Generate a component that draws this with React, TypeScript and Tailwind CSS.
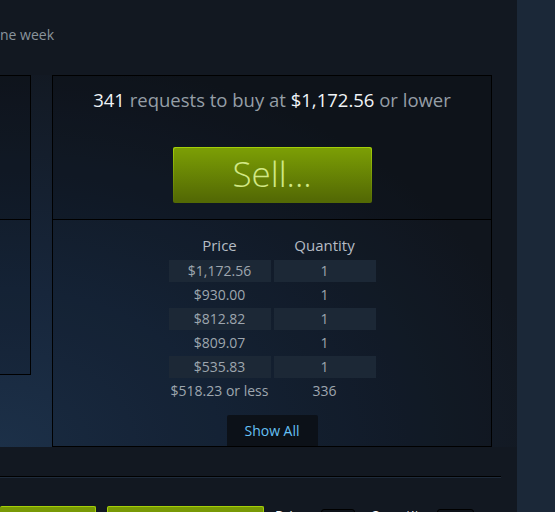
// Steam market: buy-order panel (cropped view)

const orders = [
  { price: "$1,172.56", qty: "1" },
  { price: "$930.00", qty: "1" },
  { price: "$812.82", qty: "1" },
  { price: "$809.07", qty: "1" },
  { price: "$535.83", qty: "1" },
];

function OrderTable() {
  return (
    <div className="grid grid-cols-[102px_102px] gap-x-[3px] gap-y-[2px] text-center">
      <div className="h-[24px] text-[15px] leading-[22px] text-[#b5bcc4]">Price</div>
      <div className="h-[24px] text-[15px] leading-[22px] text-[#b5bcc4]">Quantity</div>
      {orders.map((o, i) => (
        <div key={o.price} className="contents">
          <div
            className={
              "h-[22px] text-[14px] leading-[22px] text-[#9ea6ae] " +
              (i % 2 === 0 ? "bg-[#1c2836]" : "")
            }
          >
            {o.price}
          </div>
          <div
            className={
              "h-[22px] text-[14px] leading-[22px] text-[#9ea6ae] " +
              (i % 2 === 0 ? "bg-[#1c2836]" : "")
            }
          >
            {o.qty}
          </div>
        </div>
      ))}
      <div className="h-[22px] whitespace-nowrap text-[14px] leading-[22px] text-[#9ea6ae]">
        $518.23 or less
      </div>
      <div className="h-[22px] text-[14px] leading-[22px] text-[#9ea6ae]">336</div>
    </div>
  );
}

export default function App() {
  return (
    <div className="flex h-[512px] w-[555px] overflow-hidden bg-[#1b2838] font-['Open_Sans',sans-serif]">
      <div className="flex w-[517px] shrink-0 flex-col bg-[#121821]">
        <p className="mt-[26px] h-[18px] text-[14px] leading-[18px] text-[#8a949c]">ne week</p>

        <div className="mt-[31px] flex h-[372px] shrink-0 gap-[21px] bg-[radial-gradient(ellipse_at_0%_100%,#1c3048_0%,#17263b_30%,rgba(18,24,33,0)_75%)]">
          {/* left box, cut off */}
          <div className="flex h-[300px] w-[31px] flex-col border border-l-0 border-black">
            <div className="h-[144px] shrink-0 border-b border-black bg-black/20" />
            <div className="flex-1 bg-black/10" />
          </div>

          {/* right box */}
          <div className="flex h-[372px] w-[440px] flex-col border border-black">
            <div className="flex h-[144px] shrink-0 flex-col items-center border-b border-black bg-black/20 pt-[11px]">
              <p className="h-[26px] whitespace-nowrap text-[18.5px] leading-[26px] text-[#959ea6]">
                <span className="text-[#f0f4f7]">341</span> requests to buy at{" "}
                <span className="text-[#f0f4f7]">$1,172.56</span> or lower
              </p>
              <button
                type="button"
                className="mt-[34px] h-[56px] w-[199px] rounded-[2px] bg-gradient-to-b from-[#a4d007] to-[#536904] p-px"
              >
                <span className="flex h-full w-full items-center justify-center rounded-[2px] bg-[linear-gradient(to_bottom,#7a9c05_5%,#546a04_95%)] pb-[3px] text-[35px] font-light leading-none text-[#d2e885]">
                  Sell...
                </span>
              </button>
            </div>
            <div className="flex flex-1 flex-col items-center bg-black/10 pt-[14px]">
              <OrderTable />
              <button
                type="button"
                className="mt-auto h-[31px] w-[91px] rounded-t-[2px] bg-[#0c1118] text-[14px] text-[#66c0f4]"
              >
                Show All
              </button>
            </div>
          </div>
        </div>

        <div className="mt-[29px] h-[2px] w-[501px] shrink-0 border-t border-b border-t-black border-b-[#1e2b3b]" />

        <div className="mt-[28px] flex shrink-0 items-start">
          <div className="h-[30px] w-[96px] rounded-[2px] border-t border-r border-[#a4d007] bg-[#799905]" />
          <div className="ml-[11px] h-[30px] w-[157px] rounded-[2px] border-t border-r border-l border-[#a4d007] bg-[#799905]" />
          <span className="ml-[11px] mt-[3px] text-[14px] leading-[14px] text-white">Price</span>
          <div className="ml-[14px] mt-[3px] h-[24px] w-[34px] rounded-[3px] border border-[#000] bg-[#0e131a]" />
          <span className="ml-[15px] mt-[3px] text-[14px] leading-[14px] text-white">Quantity</span>
          <div className="ml-[10px] mt-[3px] h-[24px] w-[37px] rounded-[3px] border border-[#000] bg-[#0e131a]" />
        </div>
      </div>
      <div className="flex-1" />
    </div>
  );
}
